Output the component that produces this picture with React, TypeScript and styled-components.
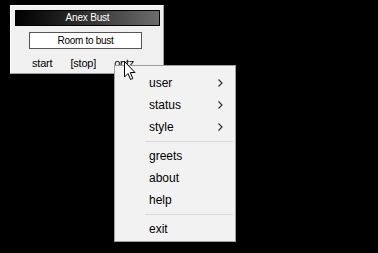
import styled, { createGlobalStyle } from 'styled-components';

const GlobalStyle = createGlobalStyle`
  html, body {
    margin: 0;
    padding: 0;
    background: #000;
  }
  body {
    width: 378px;
    height: 253px;
    overflow: hidden;
  }
`;

const Page = styled.div`
  padding: 5px 0 0 10px;
`;

const Window = styled.div`
  position: relative;
  width: 152px;
  height: 67px;
  background: #f0f0f0;
  border: 1px solid;
  border-color: #ffffff #a0a0a0 #a0a0a0 #ffffff;
  display: flex;
  flex-direction: column;
  font-family: "Liberation Sans", Arial, sans-serif;
  font-size: 11px;
  color: #000;
`;

const TitleBar = styled.div`
  margin: 4px 3px 0 4px;
  height: 14px;
  border: 1px solid #000;
  background: linear-gradient(to right, #000 0%, #222 35%, #6c6c6c 100%);
  color: #fff;
  font-size: 10px;
  letter-spacing: -0.2px;
  line-height: 14px;
  text-align: center;
`;

const TextBox = styled.div`
  margin: 6px 0 0 18px;
  width: 111px;
  height: 15px;
  border: 1px solid #555;
  background: #fff;
  font-size: 10px;
  letter-spacing: -0.3px;
  line-height: 15px;
  text-align: center;
`;

const Buttons = styled.div`
  display: flex;
  gap: 18px;
  margin: 8px 0 0 21px;
  line-height: 13px;
  letter-spacing: -0.2px;
`;

const TextButton = styled.span`
  cursor: default;
`;

const Menu = styled.div`
  position: absolute;
  left: 103px;
  top: 59px;
  width: 120px;
  padding: 6px 0 1px;
  background: #f2f2f2;
  border: 1px solid #a0a0a0;
  font-family: "Liberation Sans", Arial, sans-serif;
  font-size: 12px;
  color: #000;
  z-index: 2;
`;

const Item = styled.div`
  position: relative;
  height: 22px;
  line-height: 22px;
  padding-left: 34px;
`;

const Chevron = styled.svg`
  position: absolute;
  right: 12px;
  top: 7px;
`;

const Separator = styled.div`
  height: 1px;
  margin: 3px 2px 3px 30px;
  background: #d7d7d7;
`;

const Cursor = styled.svg`
  position: absolute;
  left: 113px;
  top: 55px;
  z-index: 3;
`;

const items: { label: string; sub?: boolean }[][] = [
  [{ label: 'user', sub: true }, { label: 'status', sub: true }, { label: 'style', sub: true }],
  [{ label: 'greets' }, { label: 'about' }, { label: 'help' }],
  [{ label: 'exit' }],
];

export default function App() {
  return (
    <Page>
      <GlobalStyle />
      <Window>
        <TitleBar>Anex Bust</TitleBar>
        <TextBox>Room to bust</TextBox>
        <Buttons>
          <TextButton>start</TextButton>
          <TextButton>[stop]</TextButton>
          <TextButton>optz.</TextButton>
        </Buttons>
        <Menu>
          {items.map((group, gi) => (
            <div key={gi}>
              {gi > 0 && <Separator />}
              {group.map(it => (
                <Item key={it.label}>
                  {it.label}
                  {it.sub && (
                    <Chevron width="5" height="8" viewBox="0 0 5 8">
                      <path d="M0.5 0.5 L4 4 L0.5 7.5" fill="none" stroke="#333" strokeWidth="1.2" />
                    </Chevron>
                  )}
                </Item>
              ))}
            </div>
          ))}
        </Menu>
        <Cursor width="12" height="19" viewBox="0 0 12 19">
          <path
            d="M0.5 0.5 L0.5 16 L4 12.5 L6.5 18.5 L8.8 17.5 L6.3 11.5 L11 11.5 Z"
            fill="#fff"
            stroke="#000"
            strokeWidth="1"
            strokeLinejoin="miter"
          />
        </Cursor>
      </Window>
    </Page>
  );
}
